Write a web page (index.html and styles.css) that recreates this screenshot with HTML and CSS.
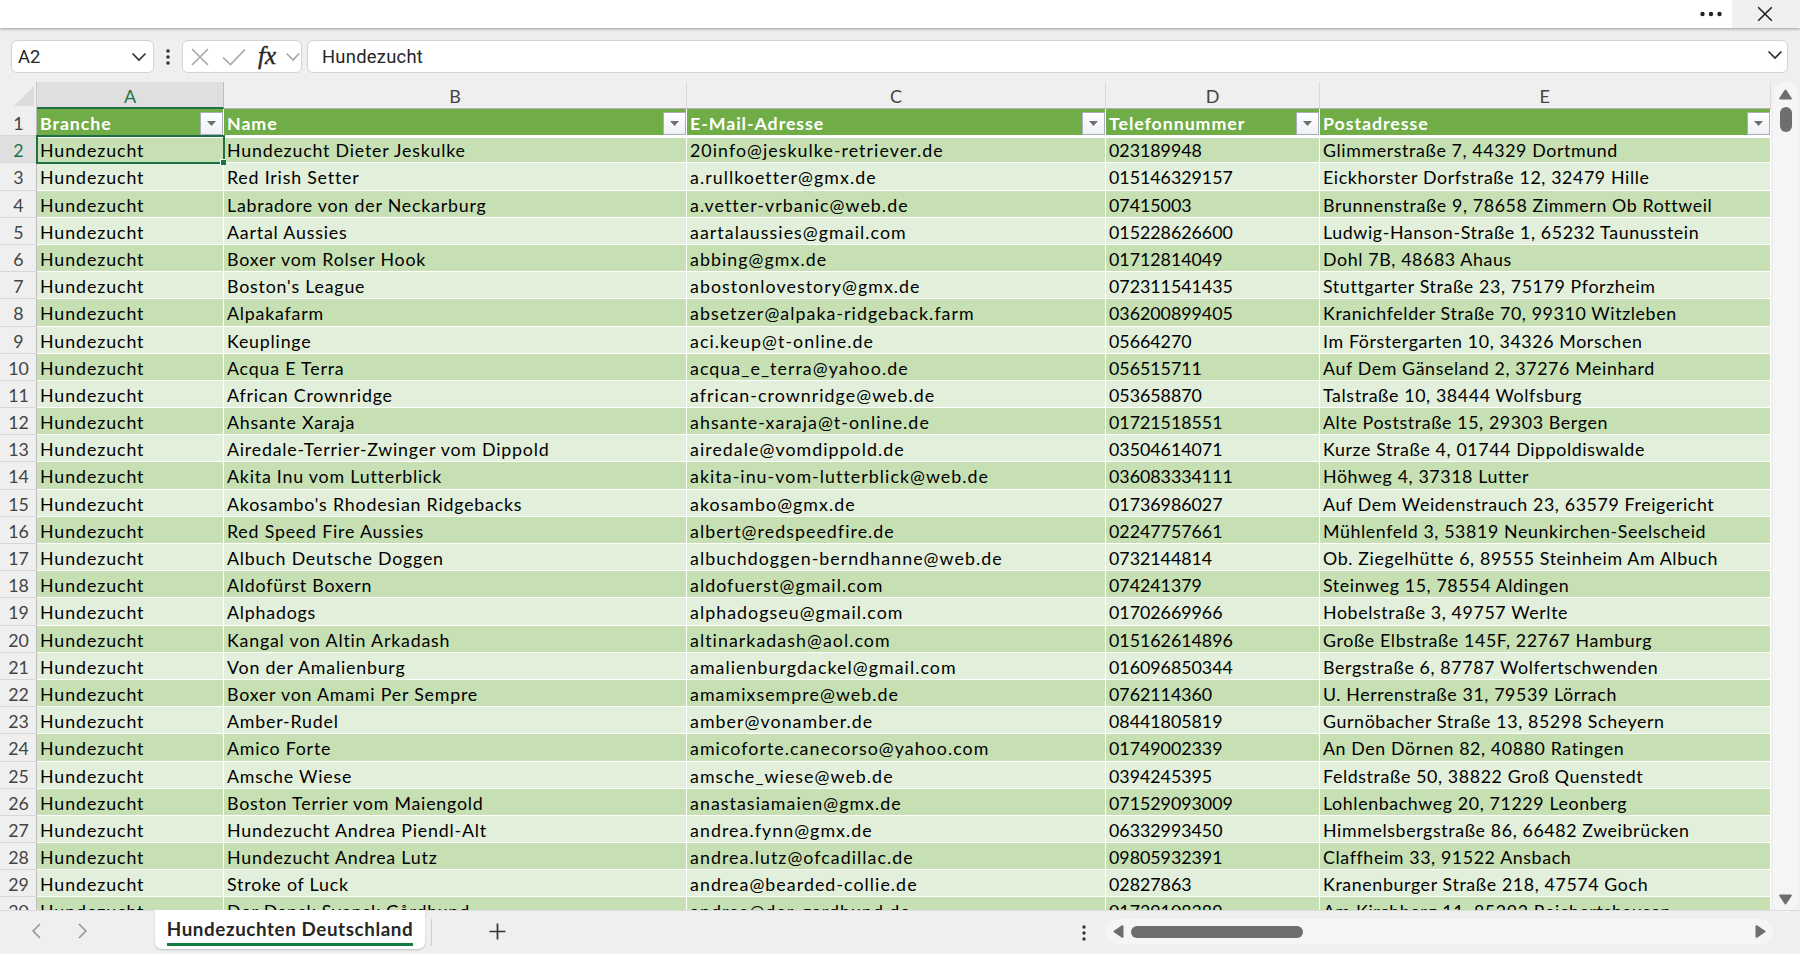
FILE: index.html
```html
<!DOCTYPE html>
<html lang="de">
<head>
    <meta charset="UTF-8">
    <meta name="viewport" content="width=device-width, initial-scale=1.0">
    <title>Hundezuchten Deutschland</title>
    <link rel="stylesheet" href="styles.css">
</head>
<body>

    <div class="titlebar">
        <button class="more">
            <svg width="24" height="6" viewBox="0 0 24 6"><circle cx="3.5" cy="3" r="2.2"/><circle cx="12" cy="3" r="2.2"/><circle cx="20.5" cy="3" r="2.2"/></svg>
        </button>
        <button class="close">
            <svg width="16" height="16" viewBox="0 0 16 16"><path d="M1.2 1.2 14.8 14.8M14.8 1.2 1.2 14.8"/></svg>
        </button>
    </div>

    <!-- Bearbeitungsleiste -->
    <div class="formulabar">
        <div class="box namebox">
            <span>A2</span>
            <svg class="line" width="16" height="10" viewBox="0 0 16 10"><path d="M1.5 1.5 8 8 14.5 1.5"/></svg>
        </div>
        <svg class="dots" width="4" height="16" viewBox="0 0 4 16"><circle cx="2" cy="2" r="1.8"/><circle cx="2" cy="8" r="1.8"/><circle cx="2" cy="14" r="1.8"/></svg>
        <div class="box tools">
            <svg class="line grey" width="18" height="18" viewBox="0 0 18 18"><path d="M1 1 17 17M17 1 1 17"/></svg>
            <svg class="line grey check" width="24" height="18" viewBox="0 0 24 18"><path d="M1 9.5 8.5 16.5 23 1.5"/></svg>
            <span class="fx">fx</span>
            <svg class="line grey" width="14" height="10" viewBox="0 0 14 10"><path d="M.8 1.5 7 8 13.2 1.5"/></svg>
        </div>
        <div class="box formula">
            <span>Hundezucht</span>
            <svg class="line" width="16" height="10" viewBox="0 0 16 10"><path d="M1.5 1.5 8 8 14.5 1.5"/></svg>
        </div>
    </div>

    <!-- Tabelle -->
    <div class="main">
        <div class="sheet">
            <div class="row letters">
                <div class="corner"><svg width="20" height="20" viewBox="0 0 20 20"><path d="M20 0V20H0Z"/></svg></div>
                <div class="letter active">A</div>
                <div class="letter">B</div>
                <div class="letter">C</div>
                <div class="letter">D</div>
                <div class="letter">E</div>
            </div>
            <div id="rows"></div>
        </div>
        <div class="vscroll">
            <svg width="13" height="11" viewBox="0 0 13 11"><path d="M6.5 1.5 11.8 9.5H1.2Z"/></svg>
            <div class="thumb"></div>
            <svg class="down" width="13" height="11" viewBox="0 0 13 11"><path d="M1.2 1.5H11.8L6.5 9.5Z"/></svg>
        </div>
    </div>

    <!-- Blattregister -->
    <div class="tabbar">
        <svg class="line nav" width="9" height="16" viewBox="0 0 9 16"><path d="M8 1 1.2 8 8 15"/></svg>
        <svg class="line nav next" width="9" height="16" viewBox="0 0 9 16"><path d="M1 1 7.8 8 1 15"/></svg>
        <div class="tab"><span>Hundezuchten Deutschland</span></div>
        <div class="divider"></div>
        <svg class="line plus" width="17" height="17" viewBox="0 0 17 17"><path d="M8.5 .5V16.5M.5 8.5H16.5"/></svg>
        <svg class="dots" width="4" height="16" viewBox="0 0 4 16"><circle cx="2" cy="2" r="1.7"/><circle cx="2" cy="8" r="1.7"/><circle cx="2" cy="14" r="1.7"/></svg>
        <div class="hscroll">
            <svg width="11" height="13" viewBox="0 0 11 13"><path d="M9.5 1.2V11.8L1.5 6.5Z"/></svg>
            <div class="thumb"></div>
            <svg class="right" width="11" height="13" viewBox="0 0 11 13"><path d="M1.5 1.2V11.8L9.5 6.5Z"/></svg>
        </div>
    </div>

    <script src="script.js"></script>
</body>
</html>
```
FILE: styles.css
```css
body {
    margin: 0;
    height: 954px;
    overflow: hidden;
    display: flex;
    flex-direction: column;
    background-color: #efefef;
    font-family: Lato, Roboto, sans-serif;
    font-size: 17.8px;
    color: #000;
}

svg {
    display: block;
    flex: none;
    fill: #6e6e6e;
}

.line {
    fill: none;
    stroke: #333;
    stroke-width: 1.7;
}

.dots {
    fill: #333;
}

button {
    border: none;
    padding: 0;
    background: none;
    display: flex;
    align-items: center;
    justify-content: center;
}

/* Titelleiste */
.titlebar {
    height: 28px;
    flex: none;
    display: flex;
    justify-content: flex-end;
    background-color: #fff;
    box-shadow: 0 1px 3px rgba(0, 0, 0, 0.35);
}

.more {
    width: 42px;
}

.more svg {
    fill: #222;
    margin-bottom: 1px;
}

.close {
    width: 68px;
    background-color: #f0f0f0;
}

.close svg {
    fill: none;
    stroke: #222;
    stroke-width: 1.6;
    margin-right: 2px;
}

/* Bearbeitungsleiste */
.formulabar {
    height: 54px;
    flex: none;
    box-sizing: border-box;
    padding: 12px 11px 0;
    display: flex;
    align-items: flex-start;
    font-family: Roboto, sans-serif;
    font-size: 18.4px;
    color: #262626;
}

.box {
    height: 33px;
    box-sizing: border-box;
    border: 1px solid #d2d2d2;
    border-radius: 6px;
    background-color: #fff;
    display: flex;
    align-items: center;
}

.namebox {
    width: 143px;
    padding: 0 6px 0 6px;
    justify-content: space-between;
}

.formulabar .dots {
    margin: 9px 12px 0 12px;
}

.tools {
    width: 120px;
    padding-left: 8px;
}

.grey {
    stroke: #a8a8a8;
}

.check {
    margin-left: 13px;
}

.fx {
    width: 22px;
    margin: -2px 6px 0 12px;
    font-family: "Liberation Serif", serif;
    font-style: italic;
    font-size: 25px;
    line-height: 28px;
    -webkit-text-stroke: 0.4px #262626;
}

.formula {
    flex: 1;
    margin-left: 5px;
    margin-right: 1px;
    padding: 0 4px 0 14px;
    justify-content: space-between;
    letter-spacing: 0.25px;
}

.formula .line {
    margin-bottom: 4px;
}

/* Tabelle */
.main {
    height: 828px;
    flex: none;
    display: flex;
}

.sheet {
    width: 1771px;
    overflow: hidden;
}

.row {
    display: grid;
    grid-template-columns: 37px 187px 463px 419px 214px 450.5px;
    grid-template-rows: 100%;
    height: 27.19px;
}

.letters {
    height: 27px;
    font-size: 18px;
    line-height: 28px;
    color: #444;
}

.letter {
    box-sizing: border-box;
    text-align: center;
    border-bottom: 1px solid #b5b5b5;
    border-right: 1px solid #dadada;
}

.letter.active {
    color: #1e7145;
    background-color: #dfdfdf;
    border-bottom: 2px solid #1e7145;
    border-right-color: #bdbdbd;
}

.corner {
    box-sizing: border-box;
    padding: 4px 0 0 14px;
    border-right: 1px solid #c8c8c8;
}

.corner svg {
    fill: #dcdcdc;
}

.num {
    box-sizing: border-box;
    padding-left: 1px;
    border-right: 1px solid #bdbdbd;
    border-bottom: 1px solid #d6d6d6;
    line-height: 29px;
    text-align: center;
    color: #444;
}

.num.active {
    color: #1e7145;
    background-color: #dfdfdf;
}

.cell {
    position: relative;
    box-sizing: border-box;
    padding-left: 3px;
    border-right: 1px solid #fff;
    border-bottom: 1px solid #fff;
    line-height: 29px;
    white-space: nowrap;
    background-color: #e2efda;
}

.branche {
    letter-spacing: 0.92px;
}

.name {
    letter-spacing: 0.8px;
}

.mail {
    letter-spacing: 1.06px;
}

.adresse {
    letter-spacing: 0.62px;
}

.odd .cell {
    background-color: #c6e0b4;
}

.head .cell {
    display: flex;
    justify-content: space-between;
    font-weight: bold;
    letter-spacing: 0.93px;
    line-height: 28px;
    color: #fff;
    background-color: #70ad47;
}

.first .cell {
    border-top: 2px solid #fff;
    line-height: 25px;
}

.filter {
    width: 23px;
    height: 23px;
    box-sizing: border-box;
    margin-top: 3px;
    border: 1px solid #a9aebd;
    background: linear-gradient(#fff, #eef0f5);
    display: flex;
    align-items: center;
    justify-content: center;
}

/* Markierte Zelle */
.selection {
    position: absolute;
    left: -1px;
    top: -3px;
    right: -2px;
    bottom: -2px;
    border: 2px solid #1e7145;
    z-index: 1;
}

.selection::after {
    content: "";
    position: absolute;
    right: -3px;
    bottom: -3px;
    width: 5px;
    height: 5px;
    border: 1px solid #fff;
    border-right: none;
    border-bottom: none;
    background-color: #1e7145;
}

/* Bildlaufleisten */
.vscroll {
    width: 25px;
    height: 830px;
    margin-left: 2px;
    box-sizing: border-box;
    padding: 7px 0;
    display: flex;
    flex-direction: column;
    align-items: center;
    border-radius: 12px;
    background-color: #f5f5f5;
}

.vscroll svg,
.hscroll svg {
    stroke: #6e6e6e;
    stroke-width: 2;
    stroke-linejoin: round;
}

.thumb {
    background-color: #6e6e6e;
    border-radius: 6px;
}

.vscroll .thumb {
    width: 12px;
    height: 25px;
    margin-top: 7px;
}

.down {
    margin-top: auto;
}

/* Blattregister */
.tabbar {
    height: 44px;
    flex: none;
    display: flex;
    align-items: flex-start;
    box-shadow: inset 0 1px #dcdcdc;
}

.nav {
    margin: 13px 0 0 32px;
    stroke: #999;
}

.next {
    margin-left: 37px;
}

.tab {
    height: 39px;
    width: 270px;
    margin-left: 68px;
    box-sizing: border-box;
    padding-top: 6px;
    text-align: center;
    background-color: #fff;
    border-radius: 0 0 7px 7px;
    box-shadow: 0 1px 2px rgba(0, 0, 0, 0.2);
}

.tab span {
    display: inline-block;
    height: 27px;
    border-bottom: 3px solid #107c41;
    font-weight: bold;
    font-size: 18.8px;
    letter-spacing: 0.6px;
    line-height: 26px;
    color: #262626;
}

.divider {
    width: 1px;
    height: 27px;
    margin: 9px 0 0 6px;
    background-color: #cfcfcf;
}

.plus {
    margin: 13px 0 0 57px;
}

.tabbar .dots {
    margin: 15px 0 0 576px;
}

.hscroll {
    width: 667px;
    height: 25px;
    margin: 9px 0 0 20px;
    box-sizing: border-box;
    padding: 0 7px;
    display: flex;
    align-items: center;
    border-radius: 12px;
    background-color: #f5f5f5;
}

.hscroll .thumb {
    width: 172px;
    height: 12px;
    margin-left: 7px;
}

.right {
    margin-left: auto;
}
```
FILE: script.js
```js
const kopf = ["Branche", "Name", "E-Mail-Adresse", "Telefonnummer", "Postadresse"];
const spalten = ["name", "mail", "telefon", "adresse"];

const daten = [
    ["Hundezucht Dieter Jeskulke", "20info@jeskulke-retriever.de", "023189948", "Glimmerstraße 7, 44329 Dortmund"],
    ["Red Irish Setter", "a.rullkoetter@gmx.de", "015146329157", "Eickhorster Dorfstraße 12, 32479 Hille"],
    ["Labradore von der Neckarburg", "a.vetter-vrbanic@web.de", "07415003", "Brunnenstraße 9, 78658 Zimmern Ob Rottweil"],
    ["Aartal Aussies", "aartalaussies@gmail.com", "015228626600", "Ludwig-Hanson-Straße 1, 65232 Taunusstein"],
    ["Boxer vom Rolser Hook", "abbing@gmx.de", "01712814049", "Dohl 7B, 48683 Ahaus"],
    ["Boston's League", "abostonlovestory@gmx.de", "072311541435", "Stuttgarter Straße 23, 75179 Pforzheim"],
    ["Alpakafarm", "absetzer@alpaka-ridgeback.farm", "036200899405", "Kranichfelder Straße 70, 99310 Witzleben"],
    ["Keuplinge", "aci.keup@t-online.de", "05664270", "Im Förstergarten 10, 34326 Morschen"],
    ["Acqua E Terra", "acqua_e_terra@yahoo.de", "056515711", "Auf Dem Gänseland 2, 37276 Meinhard"],
    ["African Crownridge", "african-crownridge@web.de", "053658870", "Talstraße 10, 38444 Wolfsburg"],
    ["Ahsante Xaraja", "ahsante-xaraja@t-online.de", "01721518551", "Alte Poststraße 15, 29303 Bergen"],
    ["Airedale-Terrier-Zwinger vom Dippold", "airedale@vomdippold.de", "03504614071", "Kurze Straße 4, 01744 Dippoldiswalde"],
    ["Akita Inu vom Lutterblick", "akita-inu-vom-lutterblick@web.de", "036083334111", "Höhweg 4, 37318 Lutter"],
    ["Akosambo's Rhodesian Ridgebacks", "akosambo@gmx.de", "01736986027", "Auf Dem Weidenstrauch 23, 63579 Freigericht"],
    ["Red Speed Fire Aussies", "albert@redspeedfire.de", "02247757661", "Mühlenfeld 3, 53819 Neunkirchen-Seelscheid"],
    ["Albuch Deutsche Doggen", "albuchdoggen-berndhanne@web.de", "0732144814", "Ob. Ziegelhütte 6, 89555 Steinheim Am Albuch"],
    ["Aldofürst Boxern", "aldofuerst@gmail.com", "074241379", "Steinweg 15, 78554 Aldingen"],
    ["Alphadogs", "alphadogseu@gmail.com", "01702669966", "Hobelstraße 3, 49757 Werlte"],
    ["Kangal von Altin Arkadash", "altinarkadash@aol.com", "015162614896", "Große Elbstraße 145F, 22767 Hamburg"],
    ["Von der Amalienburg", "amalienburgdackel@gmail.com", "016096850344", "Bergstraße 6, 87787 Wolfertschwenden"],
    ["Boxer von Amami Per Sempre", "amamixsempre@web.de", "0762114360", "U. Herrenstraße 31, 79539 Lörrach"],
    ["Amber-Rudel", "amber@vonamber.de", "08441805819", "Gurnöbacher Straße 13, 85298 Scheyern"],
    ["Amico Forte", "amicoforte.canecorso@yahoo.com", "01749002339", "An Den Dörnen 82, 40880 Ratingen"],
    ["Amsche Wiese", "amsche_wiese@web.de", "0394245395", "Feldstraße 50, 38822 Groß Quenstedt"],
    ["Boston Terrier vom Maiengold", "anastasiamaien@gmx.de", "071529093009", "Lohlenbachweg 20, 71229 Leonberg"],
    ["Hundezucht Andrea Piendl-Alt", "andrea.fynn@gmx.de", "06332993450", "Himmelsbergstraße 86, 66482 Zweibrücken"],
    ["Hundezucht Andrea Lutz", "andrea.lutz@ofcadillac.de", "09805932391", "Claffheim 33, 91522 Ansbach"],
    ["Stroke of Luck", "andrea@bearded-collie.de", "02827863", "Kranenburger Straße 218, 47574 Goch"],
    ["Der Dansk Svensk Gårdhund", "andrea@der-gardhund.de", "01739108389", "Am Kirchberg 11, 85293 Reichertshausen"]
];

const rows = document.getElementById("rows");

let html = '<div class="row head"><div class="num">1</div>';
kopf.forEach(text => {
    html += `<div class="cell">${text}<span class="filter"><svg width="9" height="5" viewBox="0 0 9 5"><path d="M0 0H9L4.5 5Z"/></svg></span></div>`;
});
html += "</div>";

daten.forEach((zeile, i) => {
    const klasse = (i % 2 === 0 ? " odd" : "") + (i === 0 ? " first" : "");
    html += `<div class="row${klasse}"><div class="num${i === 0 ? " active" : ""}">${i + 2}</div>`;
    html += `<div class="cell branche">Hundezucht${i === 0 ? '<div class="selection"></div>' : ""}</div>`;
    zeile.forEach((text, s) => {
        html += `<div class="cell ${spalten[s]}">${text}</div>`;
    });
    html += "</div>";
});

rows.innerHTML = html;
```
